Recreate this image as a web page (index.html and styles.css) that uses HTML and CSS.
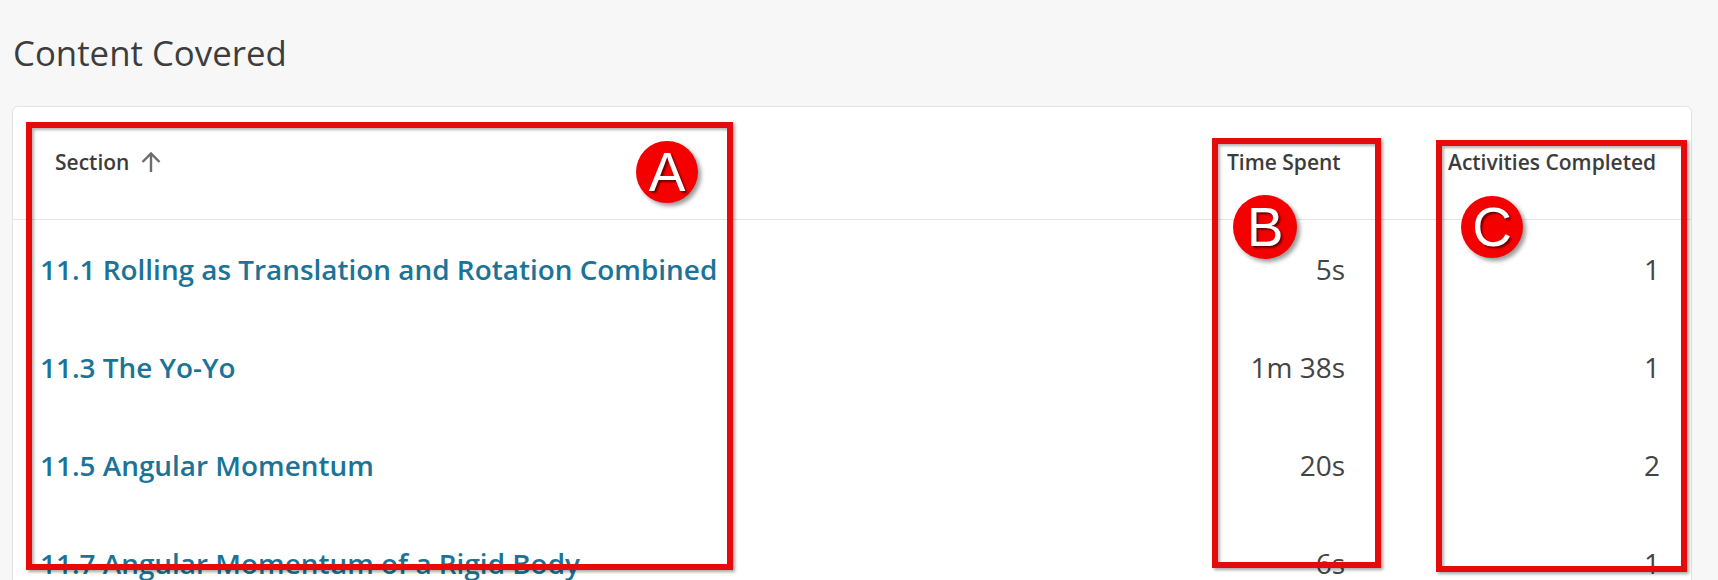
FILE: index.html
```html
<!DOCTYPE html>
<html lang="en">
<head>
<meta charset="utf-8">
<title>Content Covered</title>
<link rel="stylesheet" href="styles.css">
</head>
<body>
<div class="page">
  <h1 class="title">Content Covered</h1>
  <div class="card">
    <div class="row head">
      <div class="cell sec-h">Section
        <svg class="sort" width="22" height="22" viewBox="0 0 22 22" aria-hidden="true"><path d="M11 2.5V21M2.5 11L11 2.5L19.5 11" fill="none" stroke="#6c6c6c" stroke-width="2.4"/></svg>
      </div>
      <div class="cell">Time Spent</div>
      <div class="cell">Activities Completed</div>
    </div>
    <div class="row">
      <a class="cell link" href="#">11.1 Rolling as Translation and Rotation Combined</a>
      <div class="cell num">5s</div>
      <div class="cell num">1</div>
    </div>
    <div class="row">
      <a class="cell link" href="#">11.3 The Yo-Yo</a>
      <div class="cell num">1m 38s</div>
      <div class="cell num">1</div>
    </div>
    <div class="row">
      <a class="cell link" href="#">11.5 Angular Momentum</a>
      <div class="cell num">20s</div>
      <div class="cell num">2</div>
    </div>
    <div class="row">
      <a class="cell link" href="#">11.7 Angular Momentum of a Rigid Body</a>
      <div class="cell num">6s</div>
      <div class="cell num">1</div>
    </div>
  </div>

  <div class="mark box-a"></div>
  <div class="mark box-b"></div>
  <div class="mark box-c"></div>
  <div class="badge badge-a">A</div>
  <div class="badge badge-b">B</div>
  <div class="badge badge-c">C</div>
</div>
</body>
</html>
```

FILE: styles.css
```css
html {
  overflow: hidden;
}

body {
  margin: 0;
  background: #f7f7f7;
  font-family: "Open Sans", "Noto Sans", sans-serif;
  color: #3c3c3c;
}

.page {
  position: relative;
  padding: 0 26px 0 12px;
}

.title {
  margin: 0;
  padding-top: 28px;
  padding-left: 1px;
  font-size: 34.8px;
  font-weight: 400;
  line-height: 49px;
  color: #3d3d3d;
}

.card {
  margin-top: 29px;
  background: #ffffff;
  border: 1px solid #e2e2e2;
  border-radius: 6px;
}

.row {
  display: grid;
  grid-template-columns: 1fr 118px 212px;
  column-gap: 103px;
  align-items: center;
  height: 98px;
  padding: 0 31px 0 27px;
}

.row.head {
  box-sizing: border-box;
  height: 113px;
  padding-bottom: 3px;
  border-bottom: 1px solid #e4e4e4;
  font-size: 21px;
  font-weight: 600;
  color: #3c3c3c;
  white-space: nowrap;
}

.sec-h {
  display: flex;
  align-items: center;
  gap: 11px;
  padding-left: 15px;
}

.sort {
  display: block;
}

.link {
  font-size: 27.9px;
  font-weight: 600;
  color: #1b7498;
  text-decoration: none;
  white-space: nowrap;
}

.num {
  text-align: right;
  font-size: 28px;
  color: #444444;
}

/* annotation overlays */
.mark {
  position: absolute;
  border: 6px solid #e60a0a;
  box-shadow: 2px 2px 3px rgba(0, 0, 0, 0.35), inset 2px 2px 3px rgba(0, 0, 0, 0.3);
}

.box-a { left: 26px; top: 122px; width: 695px; height: 436px; }
.box-b { left: 1212px; top: 138px; width: 157px; height: 418px; }
.box-c { left: 1436px; top: 140px; width: 239px; height: 420px; }

.badge {
  position: absolute;
  display: flex;
  align-items: center;
  justify-content: center;
  border-radius: 50%;
  background: #f50000;
  color: #ffffff;
  font-family: "Liberation Sans", Arial, sans-serif;
  font-size: 55px;
  line-height: 1;
  text-shadow: 2px 2px 2px rgba(0, 0, 0, 0.55);
  box-shadow: 3px 3px 4px rgba(0, 0, 0, 0.4);
}

.badge-a { left: 636px; top: 141px; width: 62px; height: 62px; }
.badge-b { left: 1233px; top: 195px; width: 64px; height: 64px; }
.badge-c { left: 1461px; top: 196px; width: 62px; height: 62px; }
```
